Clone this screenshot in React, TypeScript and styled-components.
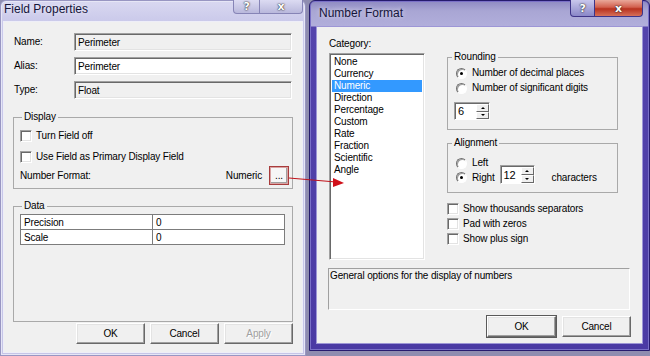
import React from "react";
import styled, { createGlobalStyle } from "styled-components";

const GlobalStyle = createGlobalStyle`
  html, body { margin: 0; padding: 0; }
  body {
    background: #8f8db0;
    font-family: "Liberation Sans", Arial, sans-serif;
    font-size: 10px;
    letter-spacing: -0.15px;
    color: #000;
  }
`;

const Desktop = styled.div`
  position: relative;
  width: 650px;
  height: 356px;
  overflow: hidden;
  display: flex;
  align-items: flex-start;
  gap: 3px;
  background: #8f8db0;
`;

const Window = styled.div<{ $active?: boolean }>`
  box-sizing: border-box;
  flex: none;
  display: flex;
  flex-direction: column;
  width: ${(p) => (p.$active ? 341 : 306)}px;
  height: ${(p) => (p.$active ? 351 : 356)}px;
  padding: ${(p) => (p.$active ? "0 7px 7px" : "0 3px 3px")};
  border: 1px solid ${(p) => (p.$active ? "#261b6e" : "#9896c2")};
  border-radius: 6px 6px 0 0;
  background: ${(p) =>
    p.$active
      ? "linear-gradient(180deg, #8e8ac2 0px, #a9a6d4 10px, #b1aedb 25px, #5444ac 26px, #4a3aa4 100%)"
      : "linear-gradient(180deg, #d9d8f1 0px, #cac9ea 21px, #c6c5e7 100%)"};
  box-shadow: ${(p) => (p.$active ? "inset 0 0 0 1px #7a70c8" : "inset 0 0 0 1px #e6e6f6")};
`;

const TitleBar = styled.div<{ $active?: boolean }>`
  flex: none;
  height: ${(p) => (p.$active ? 26 : 21)}px;
  display: flex;
  justify-content: space-between;
  align-items: flex-start;
`;

const Title = styled.span<{ $active?: boolean }>`
  font-size: 12px;
  letter-spacing: 0;
  line-height: 14px;
  color: #15153a;
  padding: ${(p) => (p.$active ? "5px 0 0 2px" : "1px 0 0 0")};
  text-shadow: 0 0 5px rgba(255, 255, 255, 0.7);
`;

const CaptionGroup = styled.div`
  display: flex;
  margin: -1px -1px 0 0;
`;

const CaptionButton = styled.span<{ $w: number; $h: number; $close?: boolean; $active?: boolean }>`
  box-sizing: border-box;
  width: ${(p) => p.$w}px;
  height: ${(p) => p.$h}px;
  display: flex;
  align-items: center;
  justify-content: center;
  font: bold 11px "DejaVu Sans", sans-serif;
  color: #fff;
  text-shadow: 0 0 1px #222, 0 0 2px #333;
  border: 1px solid ${(p) => (p.$active ? "#3e3488" : "#8684b6")};
  border-top: none;
  background: ${(p) =>
    !p.$active
      ? "linear-gradient(180deg, #dcdbf2, #b9b8dc)"
      : p.$close
      ? "linear-gradient(180deg, #e9a89a 0%, #d2604e 45%, #b8321f 55%, #d6705a 100%)"
      : "linear-gradient(180deg, #c9c7ec, #8a87c8)"};
  &:first-child { border-bottom-left-radius: 4px; }
  &:last-child { border-bottom-right-radius: 4px; border-left: none; }
`;

const Client = styled.div<{ $active?: boolean }>`
  flex: 1;
  min-height: 0;
  display: flex;
  flex-direction: column;
  background: #f0f0f0;
  box-shadow: 0 0 0 1px ${(p) => (p.$active ? "#9d96d6" : "#eeeef8")};
  padding: ${(p) => (p.$active ? "0 10px 0 11px" : "11px 9px 0 9px")};
`;

/* ---------- common controls ---------- */

const FieldGrid = styled.div`
  display: grid;
  grid-template-columns: 60px 218px;
  row-gap: 6px;
  align-items: center;
  margin-left: 1px;
`;

const TextBox = styled.div<{ $disabled?: boolean }>`
  box-sizing: border-box;
  height: 18px;
  display: flex;
  align-items: center;
  padding-left: 3px;
  background: ${(p) => (p.$disabled ? "#f0f0f0" : "#fff")};
  border: 1px solid;
  border-color: #a0a0a0 #fff #fff #a0a0a0;
  box-shadow: inset 1px 1px 0 #696969, inset -1px -1px 0 #e3e3e3;
`;

const Group = styled.fieldset<{ $pad: string; $mt?: number }>`
  margin: ${(p) => p.$mt ?? 0}px 0 0 0;
  min-width: 0;
  box-sizing: border-box;
  padding: ${(p) => p.$pad};
  border: 1px solid #a9a9a9;
`;

const Legend = styled.legend<{ $ml: number }>`
  padding: 0 2px;
  margin-left: ${(p) => p.$ml}px;
  line-height: 12px;
`;

const Row = styled.div<{ $gap?: number; $mt?: number; $ml?: number; $end?: boolean }>`
  display: flex;
  align-items: ${(p) => (p.$end ? "flex-end" : "center")};
  gap: ${(p) => p.$gap ?? 4}px;
  margin-top: ${(p) => p.$mt ?? 0}px;
  margin-left: ${(p) => p.$ml ?? 0}px;
`;

const Stack = styled.div<{ $gap: number; $mt?: number; $ml?: number }>`
  display: flex;
  flex-direction: column;
  gap: ${(p) => p.$gap}px;
  margin-top: ${(p) => p.$mt ?? 0}px;
  margin-left: ${(p) => p.$ml ?? 0}px;
`;

const Text = styled.span<{ $mb?: number; $ml?: number }>`
  line-height: 12px;
  white-space: nowrap;
  margin-bottom: ${(p) => p.$mb ?? 0}px;
  margin-left: ${(p) => p.$ml ?? 0}px;
`;

const CheckBox = styled.span`
  box-sizing: border-box;
  flex: none;
  width: 12px;
  height: 12px;
  background: #fff;
  border: 1px solid;
  border-color: #a0a0a0 #fff #fff #a0a0a0;
  box-shadow: inset 1px 1px 0 #696969, inset -1px -1px 0 #e3e3e3;
`;

const Radio = styled.span<{ $checked?: boolean; $mb?: number }>`
  box-sizing: border-box;
  flex: none;
  width: 11px;
  height: 11px;
  border-radius: 50%;
  background: #fff;
  border: 1px solid;
  border-color: #707070 #fff #fff #707070;
  box-shadow: inset 1px 1px 0 #a0a0a0;
  display: grid;
  place-items: center;
  margin-bottom: ${(p) => p.$mb ?? 0}px;
  &::after {
    content: "";
    width: 3px;
    height: 3px;
    border-radius: 50%;
    background: ${(p) => (p.$checked ? "#000" : "transparent")};
  }
`;

const PushButton = styled.span<{ $disabled?: boolean; $default?: boolean }>`
  box-sizing: border-box;
  width: 69px;
  height: 21px;
  display: flex;
  align-items: center;
  justify-content: center;
  background: #f0f0f0;
  border: 1px solid;
  border-color: #fff #696969 #696969 #fff;
  box-shadow: inset -1px -1px 0 #a0a0a0, inset 1px 1px 0 #e3e3e3;
  color: ${(p) => (p.$disabled ? "#a0a0a0" : "#000")};
  text-shadow: ${(p) => (p.$disabled ? "1px 1px 0 #fff" : "none")};
  outline: ${(p) => (p.$default ? "1px solid #5a5a5a" : "none")};
`;

const ButtonRow = styled.div<{ $gap: number; $mt: number; $mr?: number }>`
  display: flex;
  justify-content: flex-end;
  gap: ${(p) => p.$gap}px;
  margin-top: ${(p) => p.$mt}px;
  margin-right: ${(p) => p.$mr ?? 0}px;
`;

const Spin = styled.div<{ $w: number; $h: number }>`
  box-sizing: border-box;
  flex: none;
  display: flex;
  width: ${(p) => p.$w}px;
  height: ${(p) => p.$h}px;
  background: #fff;
  border: 1px solid;
  border-color: #a0a0a0 #fff #fff #a0a0a0;
  box-shadow: inset 1px 1px 0 #696969;
`;

const SpinValue = styled.span`
  flex: 1;
  display: flex;
  align-items: center;
  padding-left: 3px;
  font-size: 11px;
`;

const SpinButtons = styled.div`
  width: 13px;
  display: flex;
  flex-direction: column;
  padding: 1px 0 0;
`;

const SpinArrow = styled.span<{ $down?: boolean }>`
  flex: 1;
  display: grid;
  place-items: center;
  background: #f0f0f0;
  border: 1px solid;
  border-color: #fff #696969 #696969 #fff;
  &::after {
    content: "";
    border-left: 2px solid transparent;
    border-right: 2px solid transparent;
    ${(p) => (p.$down ? "border-top: 2px solid #000;" : "border-bottom: 2px solid #000;")}
  }
`;

/* ---------- Field Properties ---------- */

const EllipsisButton = styled.span`
  box-sizing: border-box;
  flex: none;
  width: 20px;
  height: 19px;
  margin-left: 7px;
  display: flex;
  align-items: flex-end;
  justify-content: center;
  padding-bottom: 4px;
  line-height: 8px;
  background: #f6f6f6;
  border: 1px solid #a83c3c;
  box-shadow: inset 0 0 0 1px #d9a3a3, inset -2px -2px 0 #a0a0a0;
`;

const Spacer = styled.span`
  flex: 1;
`;

const DataTable = styled.table`
  width: 265px;
  border-collapse: collapse;
  background: #fff;
  td {
    height: 14px;
    padding: 0 0 0 3px;
    line-height: 13px;
    border: 1px solid #7c7c7c;
  }
  td:first-child {
    width: 128px;
  }
`;

/* ---------- Number Format ---------- */

const TopArea = styled.div`
  display: flex;
  gap: 22px;
  margin-left: 1px;
`;

const CategoryColumn = styled.div`
  width: 96px;
  display: flex;
  flex-direction: column;
`;

const CategoryLabel = styled.span`
  margin-top: 11px;
  line-height: 12px;
`;

const ListBox = styled.div`
  box-sizing: border-box;
  margin-top: 3px;
  height: 207px;
  background: #fff;
  border: 1px solid;
  border-color: #a0a0a0 #fff #fff #a0a0a0;
  box-shadow: inset 1px 1px 0 #696969, inset -1px -1px 0 #e3e3e3;
  padding: 1px 1px 0 1px;
`;

const ListItem = styled.div<{ $selected?: boolean }>`
  height: 12px;
  line-height: 12px;
  padding-left: 2px;
  margin: 0 1px;
  background: ${(p) => (p.$selected ? "#3399ff" : "transparent")};
  color: ${(p) => (p.$selected ? "#fff" : "#000")};
  &:first-child { margin-top: 1px; }
`;

const OptionsColumn = styled.div`
  width: 171px;
  display: flex;
  flex-direction: column;
  padding-top: 24px;
`;

const DescBox = styled.div`
  box-sizing: border-box;
  width: 302px;
  height: 42px;
  margin-top: 8px;
  padding: 1px 0 0 1px;
  line-height: 12px;
  border: 1px solid;
  border-color: #a0a0a0 #fff #fff #a0a0a0;
`;

const Annotation = styled.svg`
  position: absolute;
  left: 0;
  top: 0;
  width: 650px;
  height: 356px;
  pointer-events: none;
`;

const categories = [
  "None",
  "Currency",
  "Numeric",
  "Direction",
  "Percentage",
  "Custom",
  "Rate",
  "Fraction",
  "Scientific",
  "Angle",
];

function SpinBox({ value, w, h }: { value: string; w: number; h: number }) {
  return (
    <Spin $w={w} $h={h}>
      <SpinValue>{value}</SpinValue>
      <SpinButtons>
        <SpinArrow />
        <SpinArrow $down />
      </SpinButtons>
    </Spin>
  );
}

function FieldProperties() {
  return (
    <Window>
      <TitleBar>
        <Title>Field Properties</Title>
        <CaptionGroup>
          <CaptionButton $w={27} $h={14}>?</CaptionButton>
          <CaptionButton $w={43} $h={14}>x</CaptionButton>
        </CaptionGroup>
      </TitleBar>
      <Client>
        <FieldGrid>
          <Text>Name:</Text>
          <TextBox $disabled>Perimeter</TextBox>
          <Text>Alias:</Text>
          <TextBox>Perimeter</TextBox>
          <Text>Type:</Text>
          <TextBox $disabled>Float</TextBox>
        </FieldGrid>

        <Group $pad="7px 3px 3px 6px" $mt={12}>
          <Legend $ml={2}>Display</Legend>
          <Row>
            <CheckBox />
            <Text>Turn Field off</Text>
          </Row>
          <Row $mt={9}>
            <CheckBox />
            <Text>Use Field as Primary Display Field</Text>
          </Row>
          <Row $mt={3} $gap={0}>
            <Text>Number Format:</Text>
            <Spacer />
            <Text>Numeric</Text>
            <EllipsisButton>...</EllipsisButton>
          </Row>
        </Group>

        <Group $pad="2px 6px 76px 6px" $mt={11}>
          <Legend $ml={2}>Data</Legend>
          <DataTable>
            <tbody>
              <tr>
                <td>Precision</td>
                <td>0</td>
              </tr>
              <tr>
                <td>Scale</td>
                <td>0</td>
              </tr>
            </tbody>
          </DataTable>
        </Group>

        <ButtonRow $gap={5} $mt={1}>
          <PushButton>OK</PushButton>
          <PushButton>Cancel</PushButton>
          <PushButton $disabled>Apply</PushButton>
        </ButtonRow>
      </Client>
    </Window>
  );
}

function NumberFormat() {
  return (
    <Window $active>
      <TitleBar $active>
        <Title $active>Number Format</Title>
        <CaptionGroup>
          <CaptionButton $active $w={25} $h={17}>?</CaptionButton>
          <CaptionButton $active $close $w={48} $h={17}>x</CaptionButton>
        </CaptionGroup>
      </TitleBar>
      <Client $active>
        <TopArea>
          <CategoryColumn>
            <CategoryLabel>Category:</CategoryLabel>
            <ListBox>
              {categories.map((c) => (
                <ListItem key={c} $selected={c === "Numeric"}>
                  {c}
                </ListItem>
              ))}
            </ListBox>
          </CategoryColumn>

          <OptionsColumn>
            <Group $pad="4px 6px 9px 6px">
              <Legend $ml={-2}>Rounding</Legend>
              <Stack $gap={3} $ml={2}>
                <Row $gap={5}>
                  <Radio $checked />
                  <Text>Number of decimal places</Text>
                </Row>
                <Row $gap={5}>
                  <Radio />
                  <Text>Number of significant digits</Text>
                </Row>
              </Stack>
              <Row $mt={8}>
                <SpinBox value="6" w={36} h={18} />
              </Row>
            </Group>

            <Group $pad="8px 6px 8px 6px" $mt={7}>
              <Legend $ml={-2}>Alignment</Legend>
              <Row $gap={5} $ml={2}>
                <Radio />
                <Text>Left</Text>
              </Row>
              <Row $gap={5} $mt={-4} $ml={2} $end>
                <Radio $checked $mb={1} />
                <Text>Right</Text>
                <SpinBox value="12" w={35} h={19} />
                <Text $ml={12}>characters</Text>
              </Row>
            </Group>

            <Stack $gap={3} $mt={10}>
              <Row>
                <CheckBox />
                <Text>Show thousands separators</Text>
              </Row>
              <Row>
                <CheckBox />
                <Text>Pad with zeros</Text>
              </Row>
              <Row>
                <CheckBox />
                <Text>Show plus sign</Text>
              </Row>
            </Stack>
          </OptionsColumn>
        </TopArea>

        <DescBox>General options for the display of numbers</DescBox>

        <ButtonRow $gap={6} $mt={6} $mr={1}>
          <PushButton $default>OK</PushButton>
          <PushButton>Cancel</PushButton>
        </ButtonRow>
      </Client>
    </Window>
  );
}

export default function App() {
  return (
    <>
      <GlobalStyle />
      <Desktop>
        <FieldProperties />
        <NumberFormat />
        <Annotation viewBox="0 0 650 356">
          <line x1="289" y1="178" x2="336" y2="182" stroke="#c0141c" strokeWidth="1.2" />
          <polygon points="333,178 344,183 333,187" fill="#d0101a" />
        </Annotation>
      </Desktop>
    </>
  );
}
